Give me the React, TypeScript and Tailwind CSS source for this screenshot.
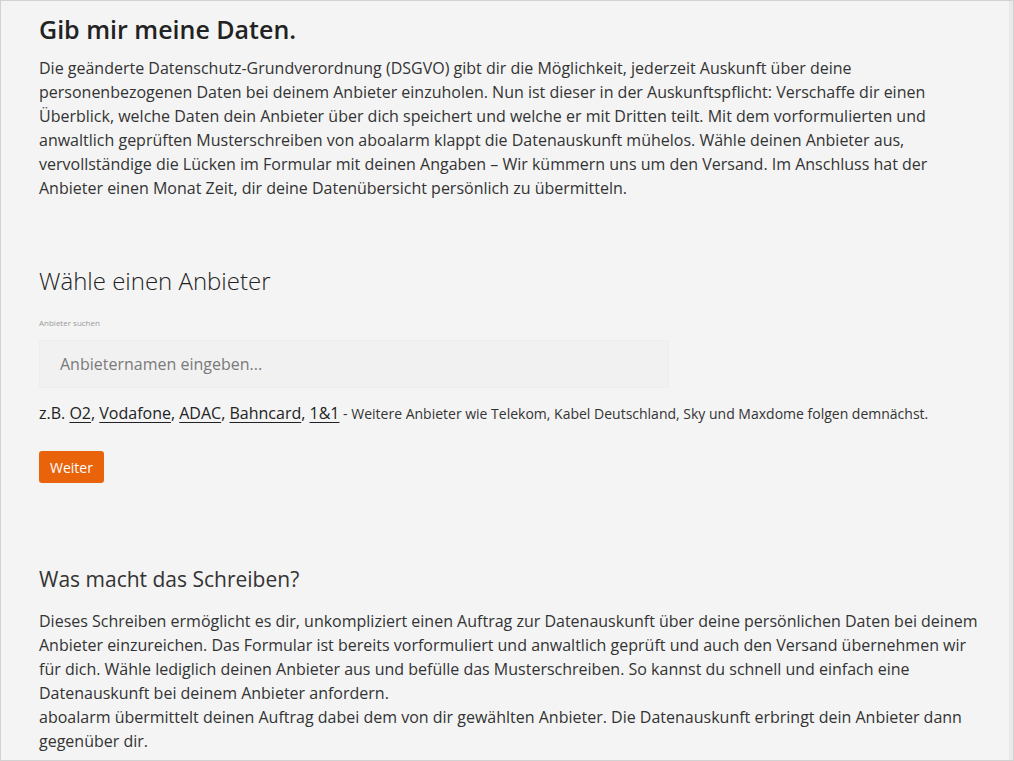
import * as React from 'react'

const font = { fontFamily: '"Open Sans", "Noto Sans", Arial, sans-serif' }

const providers = ['O2', 'Vodafone', 'ADAC', 'Bahncard', '1&1']

const App: React.FunctionComponent = () => {
  const [query, setQuery] = React.useState('')

  return (
    <div style={font} className='w-[1014px] h-[761px] overflow-hidden bg-[#f4f4f4] border border-[#d2d2d2] text-[#333]'>
      <div className='h-full border-r-[4px] border-r-[#e9e9e9] pl-[38px] pt-[10px]'>
        <div className='w-[942px]'>
          <h1 className='text-[25px] leading-[36px] font-semibold text-[#222]'>Gib mir meine Daten.</h1>
          <p className='mt-[9px] text-[16px] leading-[24px]'>
            Die geänderte Datenschutz-Grundverordnung (DSGVO) gibt dir die Möglichkeit, jederzeit Auskunft über deine
            personenbezogenen Daten bei deinem Anbieter einzuholen. Nun ist dieser in der Auskunftspflicht: Verschaffe dir einen
            Überblick, welche Daten dein Anbieter über dich speichert und welche er mit Dritten teilt. Mit dem vorformulierten und
            anwaltlich geprüften Musterschreiben von aboalarm klappt die Datenauskunft mühelos. Wähle deinen Anbieter aus,
            vervollständige die Lücken im Formular mit deinen Angaben – Wir kümmern uns um den Versand. Im Anschluss hat der
            Anbieter einen Monat Zeit, dir deine Datenübersicht persönlich zu übermitteln.
          </p>

          <h2 className='mt-[65px] text-[24px] leading-[32px] font-light text-[#222]'>Wähle einen Anbieter</h2>
          <label htmlFor='provider' className='block mt-[20px] text-[8px] leading-[12px] text-[#9a9a9a]'>Anbieter suchen</label>
          <input
            id='provider'
            value={query}
            onChange={(e: React.ChangeEvent<HTMLInputElement>) => setQuery(e.target.value)}
            placeholder='Anbieternamen eingeben...'
            className='mt-[11px] block w-[630px] h-[48px] px-[20px] bg-[#f1f1f1] border border-[#eeeeee] rounded-[2px] text-[16px] text-[#555] placeholder:text-[#7a7a7a] outline-none'
          />
          <p className='mt-[13px] text-[16px] leading-[24px] text-[#222]'>
            z.B.{' '}
            {providers.map((p, i) => (
              <React.Fragment key={p}>
                <a href='#' className='underline underline-offset-[3px]'>{p}</a>
                {i < providers.length - 1 ? ', ' : ''}
              </React.Fragment>
            ))}
            <span className='text-[14px] text-[#333]'> - Weitere Anbieter wie Telekom, Kabel Deutschland, Sky und Maxdome folgen demnächst.</span>
          </p>
          <button className='mt-[25px] h-[32px] px-[11px] bg-[#e8630a] text-white text-[14px] rounded-[3px]'>Weiter</button>

          <h3 className='mt-[81px] text-[21px] leading-[30px] font-normal text-[#333]'>Was macht das Schreiben?</h3>
          <p className='mt-[15px] text-[16px] leading-[24px]'>
            Dieses Schreiben ermöglicht es dir, unkompliziert einen Auftrag zur Datenauskunft über deine persönlichen Daten bei deinem
            Anbieter einzureichen. Das Formular ist bereits vorformuliert und anwaltlich geprüft und auch den Versand übernehmen wir
            für dich. Wähle lediglich deinen Anbieter aus und befülle das Musterschreiben. So kannst du schnell und einfach eine
            Datenauskunft bei deinem Anbieter anfordern.
            <br />
            aboalarm übermittelt deinen Auftrag dabei dem von dir gewählten Anbieter. Die Datenauskunft erbringt dein Anbieter dann
            gegenüber dir.
          </p>
        </div>
      </div>
    </div>
  )
}

export default App
